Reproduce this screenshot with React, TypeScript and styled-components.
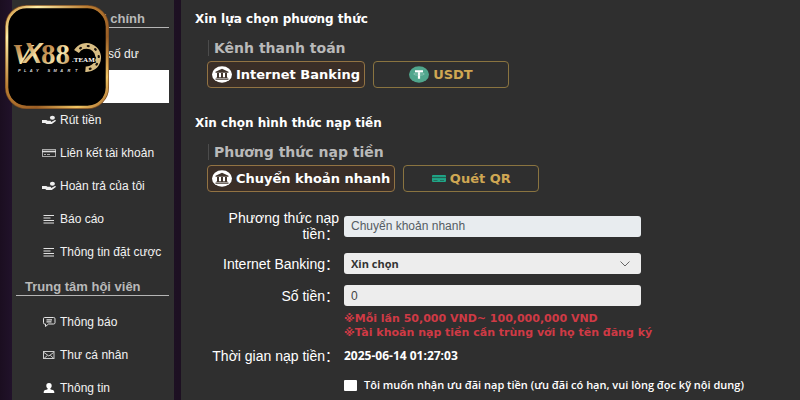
import React from "react";
import styled, { createGlobalStyle, css } from "styled-components";

const GlobalStyle = createGlobalStyle`
  * { box-sizing: border-box; }
  html { scrollbar-width: none; }
  body {
    margin: 0;
    background: #1c1022;
    color: #fff;
    font-family: "Liberation Sans", Arial, sans-serif;
  }
  button, input, select { font: inherit; margin: 0; }
`;

const wide = css`
  font-family: "DejaVu Sans", Verdana, "Noto Sans CJK SC", sans-serif;
  font-weight: 700;
`;
const humanist = css`
  font-family: "Open Sans", "Noto Sans", sans-serif;
  font-weight: 700;
`;

const Page = styled.div`
  display: flex;
  gap: 7px;
  min-height: 100vh;
  padding-left: 12px;
  background: linear-gradient(90deg, #1b0e20, #21122a 12px, #1d1022 180px);
`;

const Sidebar = styled.nav`
  flex: 0 0 162px;
  padding: 0 5px 0 4px;
  background: #2f2f2f;
`;

const GroupTitle = styled.h2`
  height: 28px;
  margin: 0 0 9px;
  padding: 10px 0 0 9px;
  border-bottom: 1px solid #b5b5b5;
  font-size: 13px;
  line-height: 18px;
  font-weight: 700;
  color: #b9b9b9;
  white-space: nowrap;
`;

const Menu = styled.ul`
  margin: 0;
  padding: 0;
  list-style: none;
`;

const MenuLink = styled.a<{ $active?: boolean }>`
  display: flex;
  align-items: center;
  gap: 4px;
  height: 33px;
  padding-left: 26px;
  font-size: 12px;
  color: ${(p) => (p.$active ? "#fff" : "#f2f2f2")};
  text-decoration: none;
  white-space: nowrap;
  background: ${(p) => (p.$active ? "#fff" : "transparent")};
`;

const MenuIcon = styled.svg`
  flex: none;
  width: 14px;
  height: 10px;
`;

const Logo = styled.a`
  position: absolute;
  top: 5px;
  left: 5px;
  line-height: 0;
`;

const Main = styled.main`
  flex: 1;
  min-width: 0;
  padding: 9px 14px 0;
  background: #2f2f2f;
`;

const Section = styled.section`
  margin-bottom: 25px;
`;

const SectionTitle = styled.h1`
  ${wide}
  margin: 0;
  font-size: 12px;
  line-height: 20px;
`;

const SubTitle = styled.h2`
  ${wide}
  margin: 11px 0 5px 13px;
  padding-left: 5px;
  border-left: 1px solid #4c4c4c;
  font-size: 14px;
  line-height: 16px;
  color: #b9b9b9;
`;

const Choices = styled.div`
  display: flex;
  gap: 8px;
  padding-left: 12px;
`;

const Choice = styled.button<{ $selected?: boolean }>`
  ${wide}
  display: flex;
  align-items: center;
  justify-content: center;
  gap: 4px;
  min-width: 136px;
  height: 27px;
  padding: 0 4px;
  border: 1px solid ${(p) => (p.$selected ? "#927343" : "#8a7440")};
  border-radius: 4px;
  background: ${(p) => (p.$selected ? "#3a2e27" : "transparent")};
  color: ${(p) => (p.$selected ? "#fff" : "#cfa753")};
  font-size: 13px;
  white-space: nowrap;
`;

const Form = styled.form`
  display: flex;
  flex-direction: column;
  margin-top: -7px;
`;

const Row = styled.div`
  display: grid;
  grid-template-columns: 144px minmax(0, 1fr);
  column-gap: 5px;
  align-items: center;
  margin-bottom: 11px;
`;

const Label = styled.label`
  font-family: "Liberation Sans", "Noto Sans CJK SC", sans-serif;
  font-size: 14px;
  line-height: 16px;
  text-align: right;
`;

const Field = styled.div`
  position: relative;
  max-width: 297px;
`;

const control = css`
  display: block;
  width: 100%;
  height: 21px;
  padding: 0 7px;
  border: 0;
  border-radius: 3px;
`;

const TextBox = styled.input`
  ${control}
  background: #ededed;
  color: #444;
  font-size: 12px;
  &:disabled { background: #e8ecef; color: #555c63; }
`;

const Select = styled.select`
  ${control}
  ${humanist}
  appearance: none;
  background: #ededed;
  color: #333;
  font-size: 11px;
`;

const Chevron = styled.svg`
  position: absolute;
  top: 8px;
  right: 11px;
  width: 10px;
  height: 6px;
  pointer-events: none;
`;

const Notes = styled.div`
  ${wide}
  margin: -5px 0 8px 149px;
  color: #cf3a45;
  font-size: 11px;
  line-height: 14px;
`;

const Time = styled.output`
  ${humanist}
  font-size: 12px;
  line-height: 16px;
`;

const Agree = styled.label`
  ${humanist}
  display: flex;
  align-items: center;
  gap: 7px;
  margin: 2px 0 7px 149px;
  font-size: 11px;
  line-height: 16px;
  font-weight: 600;
  white-space: nowrap;
`;

const Tick = styled.input`
  appearance: none;
  flex: none;
  width: 13px;
  height: 11px;
  background: #fff;
  border-radius: 1px;
  &:checked { background: #cfa753; }
`;

type IconName = "hand" | "card" | "lines" | "chat" | "mail" | "user";

const drawings: Record<IconName, React.ReactNode> = {
  hand: (
    <>
      <ellipse cx="10.4" cy="2.8" rx="2.5" ry="2" fill="#eee" />
      <path d="M0 5h3.600c1.200 0 1.700.8 2.800.8h2c1 0 1 1.100 0 1.100H6.300h2.900l3.300-1.700c1-.5 2 .2 1 1L9.800 9H4.400L3.200 7.900H0z" fill="#eee" />
    </>
  ),
  card: (
    <>
      <rect x=".5" y="1.5" width="13" height="7" fill="none" stroke="#aaa" />
      <path d="M0 3.500h14" stroke="#ddd" strokeWidth="1.600" />
      <path d="M2 6.500h2M5 6.500h3" stroke="#aaa" />
    </>
  ),
  lines: <path d="M1.500 1.500h10.500M1.500 4h7M1.500 6.500h10.500M1.500 9h10.500" stroke="#e2e2e2" strokeWidth="1.200" />,
  chat: (
    <>
      <path d="M2.500.5h9q1.500 0 1.500 1.300v4q0 1.200-1.500 1.200H6.500L3.500 9.500V7h-1Q1.500 7 1.500 5.800v-4Q1.500.5 2.500.5z" fill="none" stroke="#e2e2e2" />
      <path d="M4.500 2.800h5.500M4.500 4.800h5" stroke="#e2e2e2" strokeWidth="1.200" />
    </>
  ),
  mail: (
    <>
      <rect x="1.500" y="1.500" width="10.500" height="7" fill="none" stroke="#ccc" />
      <path d="M2 2.500l4.800 3.500 4.800-3.500M2 8.500l3.500-3.200M11.800 8.500L8.300 5.300" fill="none" stroke="#ccc" />
    </>
  ),
  user: (
    <path d="M7 0c1.900 0 2.800 1.300 2.700 2.900-.1 1.200-.7 1.900-1.300 2.400v1c1.500.5 3.900.9 3.900 2.700V10H1.700V9c0-1.800 2.400-2.200 3.900-2.700v-1C5 4.800 4.400 4.100 4.300 2.900 4.200 1.300 5.100 0 7 0z" fill="#fff" />
  ),
};

function Item({ icon, text, active }: { icon: IconName; text: string; active?: boolean }) {
  return (
    <li>
      <MenuLink href="#" $active={active}>
        <MenuIcon viewBox="0 0 14 10" aria-hidden="true">{drawings[icon]}</MenuIcon>
        {text}
      </MenuLink>
    </li>
  );
}

const BankIcon = () => (
  <svg width="20" height="17" viewBox="0 0 20 17" aria-hidden="true">
    <ellipse cx="10" cy="8.500" rx="10" ry="8.200" fill="#fff" />
    <path d="M3.500 5.700L10 2.700l6.500 3v1h-13zM5 7h2v4.300H5zM9 7h2v4.300H9zM13 7h2v4.300h-2zM4.500 11.200h11v.9h-11zM3.500 12.600h13v1.100h-13z" fill="#42362e" />
  </svg>
);

const TetherIcon = () => (
  <svg width="20" height="17" viewBox="0 0 20 17" aria-hidden="true">
    <ellipse cx="10" cy="8.500" rx="10" ry="8.200" fill="#50a58c" />
    <path d="M6 4.300h8v2h-2.900v6.500H8.900V6.300H6z" fill="#fff" />
    <ellipse cx="10" cy="8" rx="5.300" ry="1.200" fill="none" stroke="#b9ddd2" strokeWidth=".5" />
  </svg>
);

const QrCardIcon = () => (
  <svg width="14" height="8" viewBox="0 0 14 8" aria-hidden="true">
    <rect width="14" height="7" rx="1" fill="#20a587" />
    <path d="M0 2.500h14" stroke="#23604f" strokeWidth="1.200" />
    <path d="M1.500 5.500h4M8 5.500h4" stroke="#23705c" />
  </svg>
);

const notches = [-125, -85, -45, -5, 35, 75];

const LogoArt = () => (
  <svg width="104" height="104" viewBox="0 0 104 104" role="img" aria-label="VX88 Team">
    <defs>
      <linearGradient id="frame" x1="0" y1="0" x2="1" y2="1">
        <stop offset="0" stopColor="#c98a35" />
        <stop offset=".15" stopColor="#fff0a8" />
        <stop offset=".4" stopColor="#b97c32" />
        <stop offset=".65" stopColor="#9c5f25" />
        <stop offset=".85" stopColor="#f1c564" />
        <stop offset="1" stopColor="#a86b2c" />
      </linearGradient>
      <linearGradient id="gold" x1="0" y1="0" x2="1" y2="1">
        <stop offset="0" stopColor="#8a5c35" />
        <stop offset=".35" stopColor="#c99858" />
        <stop offset=".6" stopColor="#f6e6ae" />
        <stop offset="1" stopColor="#a8763c" />
      </linearGradient>
    </defs>
    <rect x="1.500" y="1.500" width="101" height="101" rx="20" fill="#000" stroke="#7b4c22" strokeWidth="3" />
    <rect x="2" y="2" width="100" height="100" rx="19.500" fill="none" stroke="url(#frame)" strokeWidth="2.600" />
    <g fill="url(#gold)" fontWeight="700">
      <text x="7" y="59" fontFamily="Liberation Serif, serif" fontStyle="italic" fontSize="30">V</text>
      <text x="18" y="58" fontFamily="Liberation Sans, sans-serif" fontStyle="italic" fontSize="29">X</text>
      <text x="36" y="59" fontFamily="Liberation Serif, serif" fontSize="29">88</text>
    </g>
    <path d="M71.500 46.500A11.700 11.700 0 1 1 80.500 64.200" fill="none" stroke="#d8bd83" strokeWidth="5.600" />
    <g transform="translate(82.200 52.600)">
      {notches.map((angle) => (
        <rect key={angle} x="10.500" y="-1.500" width="2.200" height="3" rx="1" fill="#1b120b" transform={`rotate(${angle})`} />
      ))}
    </g>
    <text x="67" y="57" fontFamily="Liberation Serif, serif" fontWeight="700" fontSize="7" fill="#fff" stroke="#000" strokeWidth="2" paintOrder="stroke">.TEAM</text>
    <text x="13" y="67" fontFamily="Liberation Sans, sans-serif" fontStyle="italic" fontWeight="700" fontSize="4" fill="#ddd">
      {"P\u00a0\u00a0\u00a0L\u00a0\u00a0\u00a0A\u00a0\u00a0\u00a0Y\u00a0\u00a0\u00a0\u00a0\u00a0\u00a0\u00a0\u00a0S\u00a0\u00a0\u00a0M\u00a0\u00a0\u00a0A\u00a0\u00a0\u00a0\u00a0R\u00a0\u00a0\u00a0\u00a0T"}
    </text>
  </svg>
);

export default function App() {
  return (
    <>
      <GlobalStyle />
      <Page>
        <Sidebar>
          <GroupTitle>Trung tâm tài chính</GroupTitle>
          <Menu>
            <Item icon="lines" text="Kiểm tra số dư" />
            <Item icon="card" text="Nạp tiền" active />
            <Item icon="hand" text="Rút tiền" />
            <Item icon="card" text="Liên kết tài khoản" />
            <Item icon="hand" text="Hoàn trả của tôi" />
            <Item icon="lines" text="Báo cáo" />
            <Item icon="lines" text="Thông tin đặt cược" />
          </Menu>
          <GroupTitle>Trung tâm hội viên</GroupTitle>
          <Menu>
            <Item icon="chat" text="Thông báo" />
            <Item icon="mail" text="Thư cá nhân" />
            <Item icon="user" text="Thông tin" />
          </Menu>
        </Sidebar>
        <Main>
          <Section>
            <SectionTitle>Xin lựa chọn phương thức</SectionTitle>
            <SubTitle>Kênh thanh toán</SubTitle>
            <Choices>
              <Choice type="button" $selected><BankIcon />Internet Banking</Choice>
              <Choice type="button"><TetherIcon />USDT</Choice>
            </Choices>
          </Section>
          <Section>
            <SectionTitle as="h2">Xin chọn hình thức nạp tiền</SectionTitle>
            <SubTitle as="h3">Phương thức nạp tiền</SubTitle>
            <Choices>
              <Choice type="button" $selected><BankIcon />Chuyển khoản nhanh</Choice>
              <Choice type="button"><QrCardIcon />Quét QR</Choice>
            </Choices>
          </Section>
          <Form>
            <Row>
              <Label htmlFor="method">Phương thức nạp tiền：</Label>
              <Field><TextBox id="method" disabled defaultValue="Chuyển khoản nhanh" /></Field>
            </Row>
            <Row>
              <Label htmlFor="bank">Internet Banking：</Label>
              <Field>
                <Select id="bank"><option>Xin chọn</option></Select>
                <Chevron viewBox="0 0 10 6" aria-hidden="true">
                  <path d="M.5.500L5 5 9.500.500" fill="none" stroke="#666" />
                </Chevron>
              </Field>
            </Row>
            <Row>
              <Label htmlFor="amount">Số tiền：</Label>
              <Field><TextBox id="amount" defaultValue="0" /></Field>
            </Row>
            <Notes>
              <div>※Mỗi lần 50,000 VND~ 100,000,000 VND</div>
              <div>※Tài khoản nạp tiền cần trùng với họ tên đăng ký</div>
            </Notes>
            <Row>
              <Label htmlFor="time">Thời gian nạp tiền：</Label>
              <Time id="time">2025-06-14 01:27:03</Time>
            </Row>
            <Agree>
              <Tick type="checkbox" />
              Tôi muốn nhận ưu đãi nạp tiền (ưu đãi có hạn, vui lòng đọc kỹ nội dung)
            </Agree>
          </Form>
        </Main>
      </Page>
      <Logo href="#"><LogoArt /></Logo>
    </>
  );
}
